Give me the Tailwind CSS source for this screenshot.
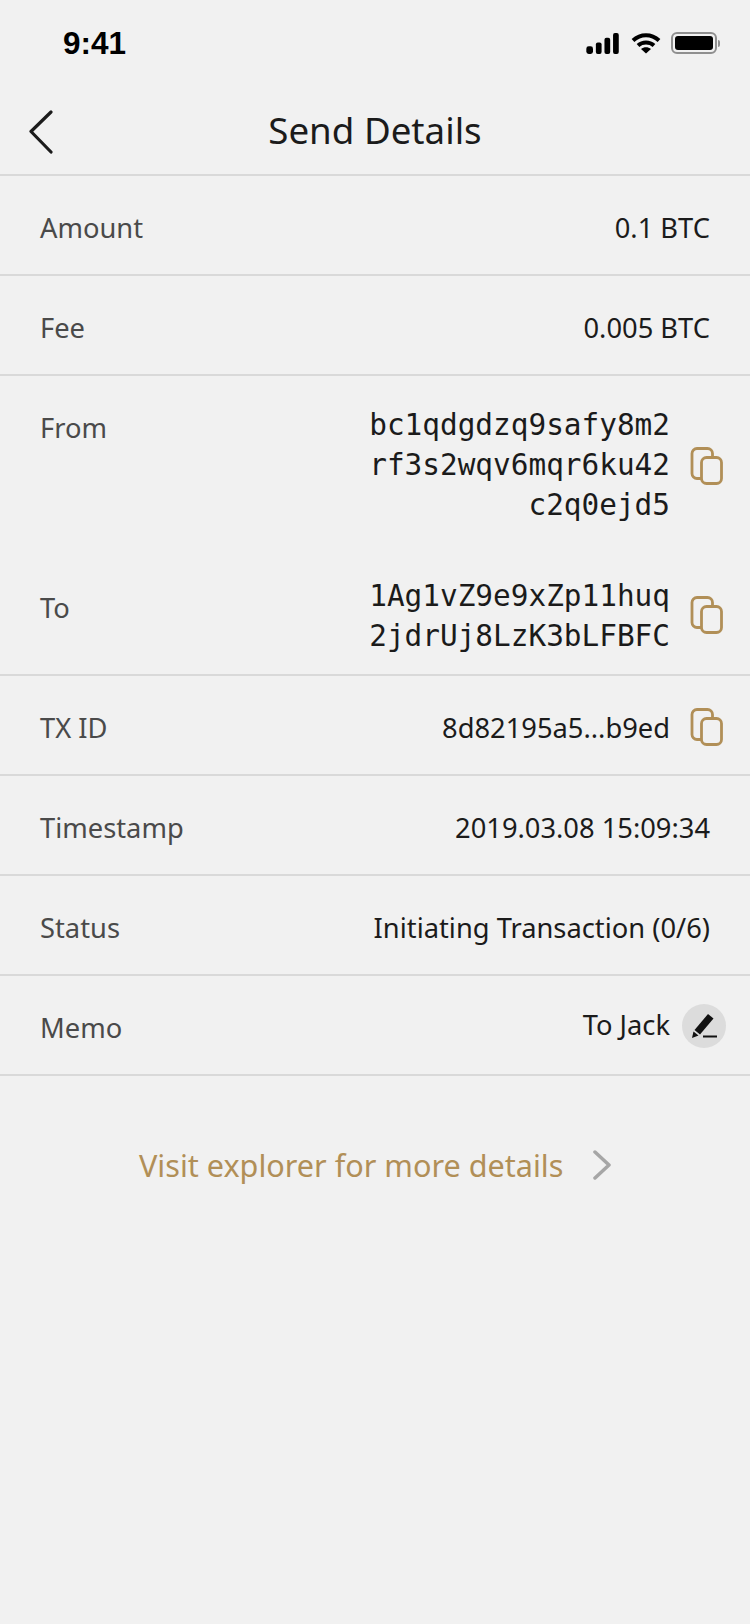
<!DOCTYPE html>
<html>
<head>
    <meta charset="UTF-8">
    <title>Send Details</title>
    <script src="https://cdn.jsdelivr.net/npm/@tailwindcss/browser@4"></script>
</head>
<body class="bg-[#f1f1f1] font-['Noto_Sans',sans-serif] w-[750px] h-[1624px] overflow-hidden">

<!-- status bar -->
<div class="h-[88px] flex items-center justify-between pl-[63px] pr-[30px]">
    <span class="font-['Liberation_Sans',sans-serif] font-bold text-[31.5px] leading-none text-black">9:41</span>
    <div class="flex items-center gap-[10px] mt-[-2px]">
        <svg width="35" height="21" viewBox="0 0 36 22" fill="#000">
            <rect x="0" y="14" width="7" height="8" rx="2.5"/>
            <rect x="10" y="10" width="6" height="12" rx="2"/>
            <rect x="19" y="5" width="6" height="17" rx="2"/>
            <rect x="28" y="0" width="6" height="22" rx="2"/>
        </svg>
        <svg width="30" height="22" viewBox="0 0 30 22" fill="none" stroke="#000" stroke-width="4">
            <path d="M2 8.500C9.500 1.500 20.500 1.500 28 8.500"/>
            <path d="M7 13.500C11.500 9.500 18.500 9.500 23 13.500"/>
            <path d="M15 21.500l-5-4.600c3-2.300 7-2.300 10 0z" fill="#000" stroke="none"/>
        </svg>
        <div class="flex items-center">
            <div class="w-[46px] h-[22px] rounded-[6px] border-2 border-[#8f8f8f] p-[2px]">
                <div class="w-full h-full bg-black rounded-[3px]"></div>
            </div>
            <div class="w-[2px] h-[7px] bg-[#8f8f8f] rounded-r-[2px] ml-[1px]"></div>
        </div>
    </div>
</div>

<!-- nav -->
<div class="relative h-[88px] flex items-center justify-center border-b-2 border-[#d9d9d9]">
    <svg class="absolute left-[28px] top-[22px]" width="28" height="44" viewBox="0 0 28 44" fill="none" stroke="#1b1b1b" stroke-width="3.2" stroke-linecap="round" stroke-linejoin="round">
        <path d="M23 2L3 21.500L23 42"/>
    </svg>
    <h1 class="text-[36.7px] leading-none text-[#1b1b1b] mt-[-1px]">Send Details</h1>
</div>

<!-- rows -->
<div class="text-[27.3px] text-[#1b1b1b]">
    <div class="h-[100px] flex items-center justify-between px-[40px] pt-[6px] border-b-2 border-[#d9d9d9]">
        <span class="text-[#4a4a4a]">Amount</span>
        <span>0.1 BTC</span>
    </div>
    <div class="h-[100px] flex items-center justify-between px-[40px] pt-[6px] border-b-2 border-[#d9d9d9]">
        <span class="text-[#4a4a4a]">Fee</span>
        <span>0.005 BTC</span>
    </div>
    <div class="h-[300px] pl-[40px] pr-[27px] pt-[32px] border-b-2 border-[#d9d9d9]">
        <div class="h-[180px] flex justify-between">
            <span class="text-[#4a4a4a] leading-[40px]">From</span>
            <div class="flex items-start gap-[20px] self-start mt-[-3px]">
                <div class="font-['DejaVu_Sans_Mono',monospace] text-[29.4px] leading-[40px] text-right w-[310px]">bc1qdgdzq9safy8m2<br>rf3s2wqv6mqr6ku42<br>c2q0ejd5</div>
                <svg class="w-[33px] h-[38px] mt-[42px]" viewBox="0 0 33 38" fill="none" stroke="#b18f57" stroke-width="2.8">
                    <path d="M11 31.500H7a5 5 0 0 1-5-5V6.500a5 5 0 0 1 5-5h10.500a5 5 0 0 1 5 5V11"/>
                    <rect x="11.500" y="10.500" width="20" height="26" rx="5"/>
                </svg>
            </div>
        </div>
        <div class="flex justify-between">
            <span class="text-[#4a4a4a] leading-[40px]">To</span>
            <div class="flex items-start gap-[20px] mt-[-12px]">
                <div class="font-['DejaVu_Sans_Mono',monospace] text-[29.4px] leading-[40px] text-right w-[310px]">1Ag1vZ9e9xZp11huq<br>2jdrUj8LzK3bLFBFC</div>
                <svg class="w-[33px] h-[38px] mt-[20px]" viewBox="0 0 33 38" fill="none" stroke="#b18f57" stroke-width="2.8">
                    <path d="M11 31.500H7a5 5 0 0 1-5-5V6.500a5 5 0 0 1 5-5h10.500a5 5 0 0 1 5 5V11"/>
                    <rect x="11.500" y="10.500" width="20" height="26" rx="5"/>
                </svg>
            </div>
        </div>
    </div>
    <div class="h-[100px] flex items-center justify-between pl-[40px] pr-[27px] pt-[6px] border-b-2 border-[#d9d9d9]">
        <span class="text-[#4a4a4a]">TX ID</span>
        <div class="flex items-center gap-[20px]">
            <span>8d82195a5...b9ed</span>
            <svg class="w-[33px] h-[38px] mt-[-3px]" viewBox="0 0 33 38" fill="none" stroke="#b18f57" stroke-width="2.8">
                <path d="M11 31.500H7a5 5 0 0 1-5-5V6.500a5 5 0 0 1 5-5h10.500a5 5 0 0 1 5 5V11"/>
                <rect x="11.500" y="10.500" width="20" height="26" rx="5"/>
            </svg>
        </div>
    </div>
    <div class="h-[100px] flex items-center justify-between px-[40px] pt-[6px] border-b-2 border-[#d9d9d9]">
        <span class="text-[#4a4a4a]">Timestamp</span>
        <span>2019.03.08 15:09:34</span>
    </div>
    <div class="h-[100px] flex items-center justify-between px-[40px] pt-[6px] border-b-2 border-[#d9d9d9]">
        <span class="text-[#4a4a4a]">Status</span>
        <span>Initiating Transaction (0/6)</span>
    </div>
    <div class="h-[100px] flex items-center justify-between pl-[40px] pr-[24px] pt-[4px] border-b-2 border-[#d9d9d9]">
        <span class="text-[#4a4a4a] mt-[2px]">Memo</span>
        <div class="flex items-center gap-[12px]">
            <span class="mt-[-3px]">To Jack</span>
            <div class="w-[44px] h-[44px] rounded-full bg-[#dcdcdc] flex items-center justify-center mt-[-3px]">
                <svg width="28" height="26" viewBox="0 0 28 26" fill="#111">
                    <path d="M18 1l5.500 4.500L10 21.500l-5.500-4.500z"/>
                    <path d="M3.500 18.500l5 4-6.500 2.500z"/>
                    <rect x="13" y="22.500" width="14" height="2"/>
                </svg>
            </div>
        </div>
    </div>
</div>

<!-- explorer link -->
<div class="flex items-center mt-[74px] pl-[139px]">
    <span class="text-[30.6px] leading-none text-[#b18f57]">Visit explorer for more details</span>
    <svg class="ml-[30px]" width="18" height="30" viewBox="0 0 18 30" fill="none" stroke="#a6a6a6" stroke-width="3.5" stroke-linecap="round" stroke-linejoin="round">
        <path d="M2 2L16 15L2 28"/>
    </svg>
</div>

</body>
</html>
